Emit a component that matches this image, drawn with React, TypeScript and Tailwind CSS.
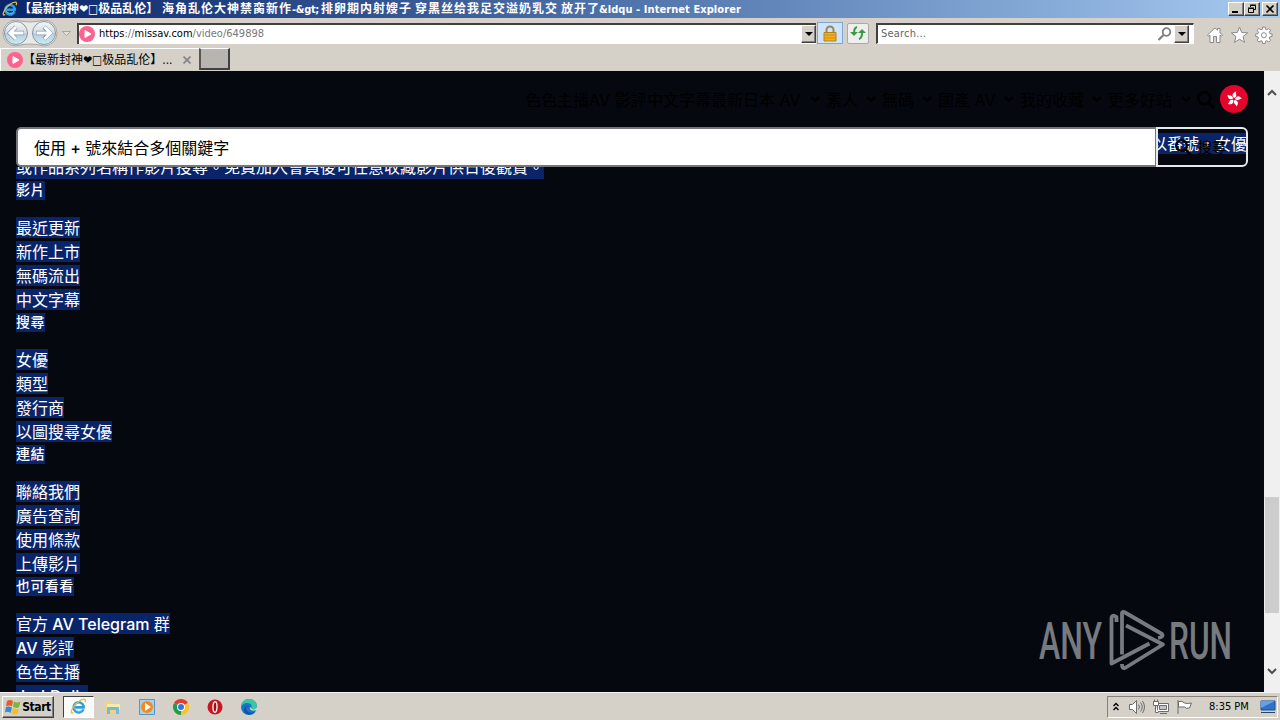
import type { ReactNode } from 'react';
import { FaSearch } from 'react-icons/fa';

const NAV = [
  { label: '色色主播', width: 'w-[64px]' },
  { label: 'AV 影評', width: 'w-[58px]' },
  { label: '中文字幕', width: 'w-[64px]' },
  { label: '最新日本 AV', width: 'w-[115px]', menu: true },
  { label: '素人', width: 'w-[56px]', menu: true },
  { label: '無碼', width: 'w-[56px]', menu: true },
  { label: '國產 AV', width: 'w-[82px]', menu: true },
  { label: '我的收藏', width: 'w-[88px]', menu: true },
  { label: '更多好站', width: 'w-[89px]', menu: true },
];

const GROUPS = [
  { title: '影片', items: ['最近更新', '新作上市', '無碼流出', '中文字幕'] },
  { title: '搜尋', items: ['女優', '類型', '發行商', '以圖搜尋女優'] },
  { title: '連結', items: ['聯絡我們', '廣告查詢', '使用條款', '上傳影片'] },
  { title: '也可看看', items: ['官方 AV Telegram 群', 'AV 影評', '色色主播', 'JerkDolls'] },
];

const TITLE = [
  { text: '【最新封神❤□极品乱伦】', className: 'w-[143px] text-[12px]' },
  { text: '海角乱伦大神禁脔新作', className: 'w-[130px] text-[12px] tracking-[1px]' },
  { text: '-&gt;', className: 'w-[29px] text-[11px] tracking-[-0.3px]' },
  { text: '排卵期内射嫂子', className: 'w-[94px] text-[12px] tracking-[1px]' },
  { text: '穿黑丝给我足交溢奶乳交', className: 'w-[146px] text-[12px] tracking-[1px]' },
  { text: '放开了', className: 'w-[38px] text-[12px] tracking-[1px]' },
  { text: '&ldqu - Internet Explorer', className: 'text-[11px] tracking-[0.07px]' },
];

const UI = "[font-family:'DejaVu_Sans_Condensed','DejaVu_Sans','Noto_Sans_CJK_SC',sans-serif] [font-stretch:condensed]";

function IeLogo({ className }: { className: string }) {
  return (
    <svg viewBox="0 0 20 20" fill="none" className={className}>
      <path d="M15.8 13.2A6 6 0 1 1 16 9.5c.1.5.1 1 0 1.5H6" stroke="#2f9fe0" strokeWidth="3" />
      <path d="M15.2 12.7A5.8 5.8 0 0 1 5 12" stroke="#8ad7fa" strokeWidth="1" />
      <path d="M4 17c-3 2-3.4-.8-1-5C6 6.500 13 1 17 1.500c1.600.3 1.500 2 .5 3.700" stroke="#e8bd39" strokeWidth="1.500" />
    </svg>
  );
}

function SiteIcon() {
  return (
    <svg viewBox="0 0 16 16" className="size-4 shrink-0">
      <circle cx="8" cy="8" r="8" fill="#fe628e" />
      <path d="M6 4.500 12 8l-6 3.500z" fill="#fff" stroke="#fff" strokeLinejoin="round" />
    </svg>
  );
}

function NavButtons() {
  return (
    <svg viewBox="0 0 74 28" className="h-7 w-[74px] shrink-0">
      <defs>
        <linearGradient id="orb" x1="0" y1="0" x2="0" y2="1">
          <stop offset="0" stopColor="#f4f6f7" />
          <stop offset=".48" stopColor="#d9dde1" />
          <stop offset=".52" stopColor="#bdcbd8" />
          <stop offset="1" stopColor="#c9edfa" />
        </linearGradient>
      </defs>
      <path d="M15 1q14 4 28 0a13 13 0 0 1 0 26q-14-4-28 0a13 13 0 0 1 0-26" fill="#e9e9e8" stroke="#aaa8a5" />
      {[15, 43].map((x) => (
        <circle key={x} cx={x} cy="14" r="11.500" fill="url(#orb)" stroke="#8198ab" />
      ))}
      <g fill="none" stroke="#8199af" strokeWidth="4.500">
        <path d="M23 14H10m5-6-6 6 6 6M35 14h13m-5-6 6 6-6 6" />
      </g>
      <g fill="none" stroke="#fff" strokeWidth="3">
        <path d="M22.500 14H10m5-6-6 6 6 6M35.500 14h13m-5-6 6 6-6 6" />
      </g>
      <path d="M61.500 12.500h8l-4 4z" fill="#e5e2de" stroke="#aaa69f" />
    </svg>
  );
}

function Raised({ children, className }: { children: ReactNode; className: string }) {
  return (
    <div className={`flex shrink-0 items-center justify-center border border-t-white border-r-[#404040] border-b-[#404040] border-l-white bg-[#d4d0c8] shadow-[inset_-1px_-1px_0_#808080] ${className}`}>
      {children}
    </div>
  );
}

function DropArrow() {
  return (
    <Raised className="h-[18px] w-[15px]">
      <svg viewBox="0 0 8 4" className="h-1 w-2"><path d="M0 0h8L4 4z" /></svg>
    </Raised>
  );
}

function TitleBar() {
  return (
    <div className="flex h-[18px] items-center bg-linear-to-r from-[#0a246a] to-[#a6caf0] pr-[2px] pl-[2px]">
      <IeLogo className="mr-px size-4 shrink-0" />
      <div className={`flex flex-1 leading-[18px] font-bold whitespace-pre text-white ${UI}`}>
        {TITLE.map((part) => (
          <span key={part.text} className={`shrink-0 leading-[19px] ${part.className}`}>{part.text}</span>
        ))}
      </div>
      <Raised className="h-[14px] w-4">
        <svg viewBox="0 0 10 10" className="size-[10px]"><path d="M1 7h6v2H1z" /></svg>
      </Raised>
      <Raised className="mr-[2px] h-[14px] w-4">
        <svg viewBox="0 0 10 10" fill="none" stroke="#000" className="size-[10px]">
          <path d="M3.500 3V1.500h5v4H7M3 1h6M1.500 4.500h5v4h-5zM1 4h6" />
        </svg>
      </Raised>
      <Raised className="h-[14px] w-4">
        <svg viewBox="0 0 10 10" fill="none" stroke="#000" strokeWidth="1.700" className="size-[10px]"><path d="m1.500 1.500 7 7m0-7-7 7" /></svg>
      </Raised>
    </div>
  );
}

function AddressBar() {
  return (
    <div className="flex h-[30px] items-center bg-[#d5d0c8] pl-px">
      <NavButtons />
      <div className="ml-[2px] flex h-[21px] w-[739px] items-center border-t-2 border-l-2 border-[#404040] bg-white">
        <SiteIcon />
        <div className={`ml-1 flex-1 text-[11px] text-[#777] ${UI}`}>
          <span className="text-black">https</span>://<span className="text-black">missav.com</span>/video/649898
        </div>
        <DropArrow />
      </div>
      <div className="ml-px flex h-[22px] w-[26px] items-center justify-center border border-[#7aa7dc] bg-[#cfe3fb]">
        <svg viewBox="0 0 14 17" className="h-[17px] w-[14px]">
          <path d="M3.500 8V5a3.500 3.500 0 0 1 7 0v3" fill="none" stroke="#98875c" strokeWidth="2" />
          <path d="M1 7.500h12V16H1z" fill="#efb11b" stroke="#b6811b" />
          <path d="M1 10h12M1 13h12" stroke="#cc8e16" />
        </svg>
      </div>
      <div className="ml-1 flex h-[21px] w-[22px] items-center justify-center rounded-[2px] border border-[#aaa] bg-[#eee]">
        <svg viewBox="0 0 16 14" fill="none" className="h-[14px] w-4">
          <path d="M7 1q-3 1-3 6M9 13q3-1 3-6" stroke="#3a9b44" strokeWidth="2" />
          <path d="M0 6h8l-4 4zM8 7l4-4 4 4z" fill="#3a9b44" />
        </svg>
      </div>
      <div className="ml-[7px] flex h-[21px] w-[318px] items-center border border-t-2 border-l-2 border-t-[#404040] border-r-white border-b-white border-l-[#404040] bg-white pr-1">
        <span className={`mt-[2px] ml-[3px] flex-1 text-[11px] tracking-[0.2px] text-[#666] ${UI}`}>Search...</span>
        <svg viewBox="0 0 14 14" fill="none" stroke="#7d7d7d" className="mr-[2px] size-[14px]">
          <circle cx="8.500" cy="5" r="3.800" strokeWidth="1.800" />
          <path d="m5.500 8-5 5" strokeWidth="2.200" />
        </svg>
        <DropArrow />
      </div>
      <svg viewBox="0 0 68 18" className="mt-1 ml-3 h-[18px] w-[68px] shrink-0" fill="#fff" stroke="#8b8b8b" strokeLinejoin="round">
        <path d="M1.500 9 9 1.800l2.500 2.400V2.500h2.500V7l2.500 2-1 1.200-1.500-1V16.500h-3.500v-6h-3v6H4V9.200l-1.500 1z" />
        <path d="m33.500 1 2.200 5.500 6 .3-4.700 3.800 1.600 5.800-5.100-3.200-5.100 3.200 1.600-5.800-4.700-3.800 6-.3z" />
        <path d="m56.600 1-.3 2.300-1.300.5-2-1.300-1.800 1.800 1.300 2-.5 1.300-2.300.4v2.500l2.300.4.5 1.300-1.300 2 1.800 1.800 2-1.300 1.300.5.3 2.300h2.600l.3-2.300 1.300-.5 2 1.300 1.800-1.800-1.300-2 .5-1.300 2.300-.4V8l-2.300-.4-.5-1.300 1.300-2-1.800-1.800-2 1.300-1.300-.5L59.200 1z" />
        <circle cx="57.900" cy="9.200" r="2.500" />
      </svg>
    </div>
  );
}

function TabRow() {
  return (
    <div className="flex h-[23px] bg-[#d5d0c8]">
      <div className="flex w-[199px] items-center border-t border-l border-white pl-[6px]">
        <SiteIcon />
        <span className={`w-[150px] overflow-hidden text-[12px] leading-5 whitespace-nowrap text-black ${UI}`}>【最新封神❤□极品乱伦】...</span>
        <svg viewBox="0 0 8 8" stroke="#858585" strokeWidth="1.700" className="ml-[10px] size-2"><path d="m.5.5 7 7m0-7-7 7" /></svg>
      </div>
      <div className="h-[22px] w-[31px] border-t border-r-2 border-b-2 border-l-2 border-t-white border-r-[#404040] border-b-[#404040] border-l-[#555] bg-[#b8b4b0]" />
    </div>
  );
}

function SiteHeader() {
  return (
    <header className="flex h-14 shrink-0 items-center justify-end pt-px pr-4 text-base whitespace-nowrap text-black">
      {NAV.map(({ label, width, menu }) => (
        <div key={label} className={`flex shrink-0 items-center justify-between ${width}`}>
          {label}
          {menu && (
            <svg viewBox="0 0 12 8" fill="none" stroke="#000" strokeWidth="2.200" className="mr-[5px] h-2 w-3"><path d="m2 1 4 4 4-4" /></svg>
          )}
        </div>
      ))}
      <FaSearch className="mr-[5px] size-[18px]" />
      <svg viewBox="0 0 28 28" className="mb-px size-7 shrink-0">
        <circle cx="14" cy="14" r="14" fill="#e2062c" />
        <g fill="#fff">
          {[12, 84, 156, 228, 300].map((angle) => (
            <path key={angle} transform={`rotate(${angle} 14 14)`} d="M14 13c-3.200-1.500-3-5 .7-6.800-.7 2 1.300 2.700.7 4.700-.2.900-.8 1.500-1.400 2.100" />
          ))}
        </g>
      </svg>
    </header>
  );
}

function SearchForm() {
  return (
    <div className="mx-4 flex h-10 shrink-0 text-base">
      <div className="flex w-[1140px] items-center rounded-l-[5px] border-2 border-[#73767b] border-r-[1px] bg-white pt-px pl-4 text-black">
        <span className="whitespace-pre">使用<span className="font-medium"> + </span>號來結合多個關鍵字</span>
      </div>
      <div className="relative flex w-[92px] items-start justify-end overflow-hidden rounded-r-md border-2 border-[#e6e9ec] pt-1 text-white">
        <span className="-mr-px h-[21px] shrink-0 bg-[#0a246a] leading-[22px] whitespace-nowrap">以番號，女優</span>
        <div className="absolute top-[6px] left-[17px] flex items-center gap-[7px] text-[14px] leading-6 text-black">
          <FaSearch className="size-4" />
          搜尋
        </div>
      </div>
    </div>
  );
}

function FooterLinks() {
  return (
    <div className="min-h-0 flex-1 overflow-hidden pl-4 text-white">
      <div className="-mt-[11px] flex h-6 items-center">
        <span className="h-[22px] bg-[#0a246a] text-base leading-[21px]">或作品系列名稱作影片搜尋。免費加入會員後可任意收藏影片供日後觀賞。</span>
      </div>
      {GROUPS.map((group) => (
        <section key={group.title}>
          <h3 className="mb-4 flex h-5 items-center text-sm font-medium tracking-[0.4px]">
            <span className="h-[19px] bg-[#0a246a] leading-[18px]">{group.title}</span>
          </h3>
          {group.items.map((item) => (
            <div key={item} className="flex h-6 items-start pt-px text-base">
              <span className="h-[21px] bg-[#0a246a] leading-[22px]">
                {item.split(/([A-Za-z ]+)/).map((run, i) => (
                  <span key={i} className={i % 2 ? 'font-medium whitespace-pre' : ''}>{run}</span>
                ))}
              </span>
            </div>
          ))}
        </section>
      ))}
    </div>
  );
}

function Watermark() {
  return (
    <svg viewBox="0 0 200 70" className="absolute right-[28px] bottom-[15px] h-[70px] w-[200px]">
      <g fill="#777a7e" fontFamily="Roboto" fontSize="51" fontWeight="500">
        <text x="3" y="52" textLength="63" lengthAdjust="spacingAndGlyphs">ANY</text>
        <text x="133" y="52" textLength="63" lengthAdjust="spacingAndGlyphs">RUN</text>
      </g>
      <g fill="none" stroke="#777a7e" strokeWidth="3.800" strokeLinejoin="round">
        <path d="M80.500 15v-5q-4.500-3-5 1v45.500l38-20" />
        <path d="M86 47.500V6q.5-2 3-.5l37 21.500q2 3-4 4" />
        <path d="M90 18.500 127 37.500 89 61q-3 1-3-4" />
      </g>
    </svg>
  );
}

function Scrollbar() {
  return (
    <div className="flex w-4 flex-col items-center bg-[#f0f0f0]">
      <svg viewBox="0 0 10 7" fill="none" stroke="#505050" strokeWidth="2" className="mt-[18px] h-[7px] w-[10px]"><path d="m1 6 4-4 4 4" /></svg>
      <div className="mt-[401px] h-[116px] w-[14px] bg-[#cdcdcd]" />
      <svg viewBox="0 0 10 7" fill="none" stroke="#505050" strokeWidth="2" className="mt-[55px] h-[7px] w-[10px]"><path d="m1 1 4 4 4-4" /></svg>
    </div>
  );
}

function Taskbar() {
  return (
    <div className="flex h-7 items-center border-t border-[#f4f2ee] bg-[#d5d0c8] pr-[2px] pl-[2px]">
      <Raised className="h-[22px] w-[52px]">
        <svg viewBox="0 0 16 16" className="mr-[1px] size-4">
          <path d="M2 2q3-2 6 0L7 7Q4 6 1 7z" fill="#e85b26" />
          <path d="M9 2.500q3 2 6.500 0L14 8q-3 2-6-.5z" fill="#76b837" />
          <path d="M1 8q3-1 6 .5L5.500 14q-3-2-5.500-.5z" fill="#3e87d0" />
          <path d="M8 9q3 2 6 .5L12.500 15q-3 1-6-.5z" fill="#f5bf28" />
        </svg>
        <span className={`text-[12px] font-bold tracking-[-0.4px] ${UI}`}>Start</span>
      </Raised>
      <div className="ml-[9px] flex h-[22px] w-[31px] items-center justify-center border border-t-[#404040] border-r-white border-b-white border-l-[#404040] bg-[#fbfaf9]">
        <IeLogo className="size-[17px]" />
      </div>
      <div className="ml-[11px] flex flex-1 items-center gap-[18px]">
        <svg viewBox="0 0 16 16" className="size-4">
          <path d="M1 2h5l1 2h7v10H1z" fill="#edd57b" />
          <path d="M2 5h13v6H2z" fill="#f6eaa6" />
          <path d="M2 15V9q0-1 1-1h10q1 0 1 1v6h-3v-4H5v4z" fill="#72b9dc" />
        </svg>
        <svg viewBox="0 0 16 16" className="size-4">
          <path d="M.5.5h15v15H.5z" fill="#a9d1ed" stroke="#5396c8" />
          <circle cx="8" cy="8" r="6" fill="#f18a1b" />
          <path d="m6 4 6 4-6 4z" fill="#fff" />
        </svg>
        <svg viewBox="0 0 16 16" className="size-4">
          <path d="M8 8 1.070 4A8 8 0 0 1 14.930 4z" fill="#e23d30" />
          <path d="M8 8 8 16A8 8 0 0 1 1.070 4z" fill="#269c4b" />
          <path d="M8 8 14.930 4A8 8 0 0 1 8 16z" fill="#fbc31b" />
          <circle cx="8" cy="8" r="4" fill="#fff" />
          <circle cx="8" cy="8" r="3" fill="#3477dc" />
        </svg>
        <svg viewBox="0 0 16 16" className="size-4">
          <circle cx="8" cy="8" r="7.500" fill="#c71822" />
          <ellipse cx="8" cy="8" rx="2" ry="5.300" fill="#97101a" stroke="#fff" strokeWidth="1.300" />
        </svg>
        <svg viewBox="0 0 16 16" className="size-4">
          <circle cx="8" cy="8" r="8" fill="#1673c9" />
          <path d="M0 8C0 3 4 0 8 0c5 0 8 4 8 7 0 4-6 5-6 2 2-3-1-5-4-5-3 0-5 2-6 4" fill="#39c6a5" />
          <path d="M5 9c0 4 4 6 9 4-3 4-11 3-11-2 0-3 3-5 5-4-2 0-3 1-3 2" fill="#164f9e" />
          <path d="M9 8c-1 3 2 5 7 3V8c-2 3-5 3-6 1" fill="#d5d0c8" />
        </svg>
      </div>
      <div className="flex h-[22px] w-[171px] items-center border border-t-[#858078] border-r-white border-b-white border-l-[#858078] pl-[5px]">
        <svg viewBox="0 0 6 9" fill="none" stroke="#000" strokeWidth="1.400" className="h-[9px] w-[6px]"><path d="m.5 4 2.500-2.500L5.500 4m-5 4L3 5.500 5.500 8" /></svg>
        <svg viewBox="0 0 64 16" fill="#fff" stroke="#6c6c6c" className="ml-[10px] h-4 w-16">
          <path d="M.5 5.500h3l4-4v13l-4-4h-3z" />
          <path d="M9.500 5.500q2 2.500 0 5m2-7q3.500 4.500 0 9m2-10.500q4 6 0 12" fill="none" />
          <path d="M28.500 4.500h11v8h-11zM31 14.500h7" />
          <path d="M30.500 6.500h7v4h-7z" fill="#c4c4c4" />
          <path d="M24.500 2.500h5v4h-5zm1-2v2m3-2v2m-2 4v7h3" />
          <path d="M49 1v14" fill="none" />
          <path d="M49.500 2.500q4-1 6 1.500 2 1 7 0l-2 5q-4 1-5-1h-6z" />
        </svg>
        <span className={`mt-[2px] ml-4 flex-1 text-[11px] whitespace-nowrap ${UI}`}>8:35 PM</span>
        <svg viewBox="0 0 16 14" className="mr-px h-[14px] w-4">
          <path d="M1 1h14v9H1z" fill="#2f72c9" stroke="#174e98" />
          <path d="M1 1h14L1 8z" fill="#64a0e3" />
          <path d="M1 12h14v1H1z" fill="#24436d" />
        </svg>
      </div>
    </div>
  );
}

export default function App() {
  return (
    <div className="flex h-[720px] w-[1280px] flex-col overflow-hidden bg-[#d5d0c8]">
      <TitleBar />
      <AddressBar />
      <TabRow />
      <div className="flex h-[621px]">
        <div className="relative flex w-[1264px] flex-col bg-[#05080f] [font-family:'Inter','Noto_Sans_CJK_TC',sans-serif]">
          <SiteHeader />
          <SearchForm />
          <FooterLinks />
          <Watermark />
        </div>
        <Scrollbar />
      </div>
      <Taskbar />
    </div>
  );
}
